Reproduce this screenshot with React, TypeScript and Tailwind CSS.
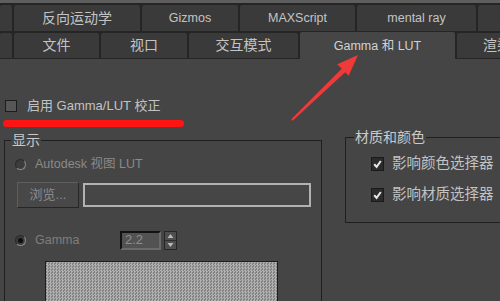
import React from "react";

const topTabs = [
  { w: 12, label: "" },
  { w: 126, label: "反向运动学" },
  { w: 96, label: "Gizmos" },
  { w: 115, label: "MAXScript" },
  { w: 119, label: "mental ray" },
  { w: 40, label: "" },
];

const bottomTabs = [
  { w: 12, label: "" },
  { w: 85, label: "文件" },
  { w: 86, label: "视口" },
  { w: 109, label: "交互模式" },
  { w: 155, label: "Gamma 和 LUT", active: true },
  { w: 50, label: "渲染器", clip: true },
];

function Tab({ w, label, active, clip }: { w: number; label: string; active?: boolean; clip?: boolean }) {
  if (active) {
    return (
      <div
        className="-mt-[1px] flex h-[27px] shrink-0 items-start justify-center overflow-hidden rounded-t-[2px] bg-[#464646] pt-[5px] text-[#d2d2d2]"
        style={{ width: w }}
      >
        {label}
      </div>
    );
  }
  return (
    <div
      className={
        "flex h-full shrink-0 items-center overflow-hidden whitespace-nowrap rounded-t-[2px] bg-[#3a3a3a] text-[#c4c4c4] " +
        (clip ? "justify-start pl-[26px]" : "justify-center")
      }
      style={{ width: w }}
    >
      {label}
    </div>
  );
}

function CheckMark() {
  return (
    <svg className="shrink-0" width="13" height="14" viewBox="0 0 13 14">
      <rect x="0.5" y="0.5" width="12" height="13" fill="#2b2b2b" stroke="#1a1a1a" />
      <path d="M3.2 7.2 L5.6 9.8 L9.8 4" fill="none" stroke="#e6e6e6" strokeWidth="2" />
    </svg>
  );
}

function Radio({ checked }: { checked?: boolean }) {
  return (
    <div className="flex h-[11px] w-[11px] shrink-0 items-center justify-center rounded-full border border-[#8a8a8a] border-t-[#2a2a2a] border-l-[#2a2a2a] bg-[#3c3c3c]">
      {checked && <div className="h-[5px] w-[5px] rounded-full bg-[#0e0e0e]" />}
    </div>
  );
}

export default function App() {
  return (
    <div className="relative h-[301px] w-[500px] overflow-hidden bg-[#252525] font-['Liberation_Sans','Noto_Sans_CJK_SC',sans-serif] text-[12.5px]">
      <div className="h-[3px] bg-[#5e5e5e]" />

      <div className="pt-[2px]">
        <div className="flex h-[26px] gap-[2px] text-[14px]">
          {topTabs.map((t, i) => (
            <div key={i} className={"h-[26px] shrink-0 " + (/[A-Za-z]/.test(t.label) ? "text-[12.5px]" : "")}>
              <Tab w={t.w} label={t.label} />
            </div>
          ))}
        </div>
        <div className="mt-[2px] flex h-[26px] items-start gap-[2px] text-[14px]">
          {bottomTabs.map((t, i) => (
            <div key={i} className={"h-[25px] shrink-0 " + (t.active ? "text-[12.5px]" : "")}>
              <Tab w={t.w} label={t.label} active={t.active} clip={t.clip} />
            </div>
          ))}
        </div>
      </div>

      <div className="flex h-[242px] flex-col overflow-hidden bg-[#454545] text-[#c2c2c2]">
        <div className="ml-[5px] mt-[40px] flex h-[14px] items-center gap-[10px] text-[13px]">
          <div className="h-[12px] w-[12px] border border-[#1c1c1c] bg-[#575757]" />
          <span>启用 Gamma/LUT 校正</span>
        </div>

        <div className="mt-[16px] flex w-[500px] items-start overflow-hidden">
          <fieldset className="ml-[4px] mt-[3px] h-[220px] w-[318px] shrink-0 border border-[#1f1f1f] p-0">
            <legend className="ml-[6px] px-[1px] text-[14px] leading-[16px] text-[#cacaca]">显示</legend>
            <div className="pl-[10px] pt-[9px]">
              <div className="flex h-[14px] items-center">
                <Radio />
                <span className="ml-[9px] text-[#8a8a8a]">Autodesk 视图 LUT</span>
              </div>

              <div className="mt-[11px] flex h-[26px] items-center">
                <div className="ml-[2px] flex h-[26px] w-[62px] items-center justify-center border border-[#5e5e5e] border-b-[#262626] border-r-[#262626] bg-[#484848] text-[13px] text-[#8c8c8c]">
                  浏览...
                </div>
                <div className="ml-[4px] h-[24px] w-[228px] border-2 border-[#b2b2b2] bg-[#464646]" />
              </div>

              <div className="mt-[22px] flex h-[20px] items-center">
                <Radio checked />
                <span className="ml-[9px] w-[85px] text-[#7e7e7e]">Gamma</span>
                <div className="flex h-[19px] w-[41px] items-center border-2 border-[#121212] border-b-[#6a6a6a] border-r-[#6a6a6a] bg-[#525252] pl-[3px] text-[13px] text-[#8e8e8e]">
                  2.2
                </div>
                <svg className="ml-[3px]" width="13" height="19" viewBox="0 0 13 19">
                  <rect x="0.5" y="0.5" width="12" height="18" fill="#4e4e4e" stroke="#262626" />
                  <line x1="1" y1="9.5" x2="12" y2="9.5" stroke="#2e2e2e" />
                  <path d="M6.5 3 L9.5 7 L3.5 7 Z" fill="#b8b8b8" />
                  <path d="M6.5 16 L9.5 12 L3.5 12 Z" fill="#b8b8b8" />
                </svg>
              </div>

              <div className="ml-[30px] mt-[11px] h-[60px] w-[233px] border border-[#1e1e1e] bg-[image:repeating-conic-gradient(#b0b0b0_0_25%,#828282_0_50%)] bg-[length:3px_3px]" />
            </div>
          </fieldset>

          <div className="relative ml-[23px] mt-[8px] w-[155px] shrink-0 border-b border-l border-t border-[#1f1f1f]">
            <span className="absolute -top-[9px] left-[8px] bg-[#454545] px-[1px] text-[14px] leading-[16px] text-[#cacaca]">
              材质和颜色
            </span>
            <div className="pb-[20px] pl-[25px] pt-[19px] text-[14.5px]">
              <div className="flex h-[14px] items-center gap-[8px] whitespace-nowrap">
                <CheckMark />
                <span>影响颜色选择器</span>
              </div>
              <div className="mt-[17px] flex h-[14px] items-center gap-[8px] whitespace-nowrap">
                <CheckMark />
                <span>影响材质选择器</span>
              </div>
            </div>
          </div>
        </div>
      </div>

      <svg className="pointer-events-none absolute left-0 top-0" width="500" height="301" viewBox="0 0 500 301">
        <line x1="6.5" y1="123.5" x2="180.5" y2="123.5" stroke="#ff1414" strokeWidth="7" strokeLinecap="round" />
        <polygon points="291.3,119.3 343.2,67.2 346.8,70.8 292.7,120.7" fill="#f03a3a" />
        <polygon points="358,55 337.3,64.3 348.7,75.7" fill="#f03a3a" />
      </svg>
    </div>
  );
}
